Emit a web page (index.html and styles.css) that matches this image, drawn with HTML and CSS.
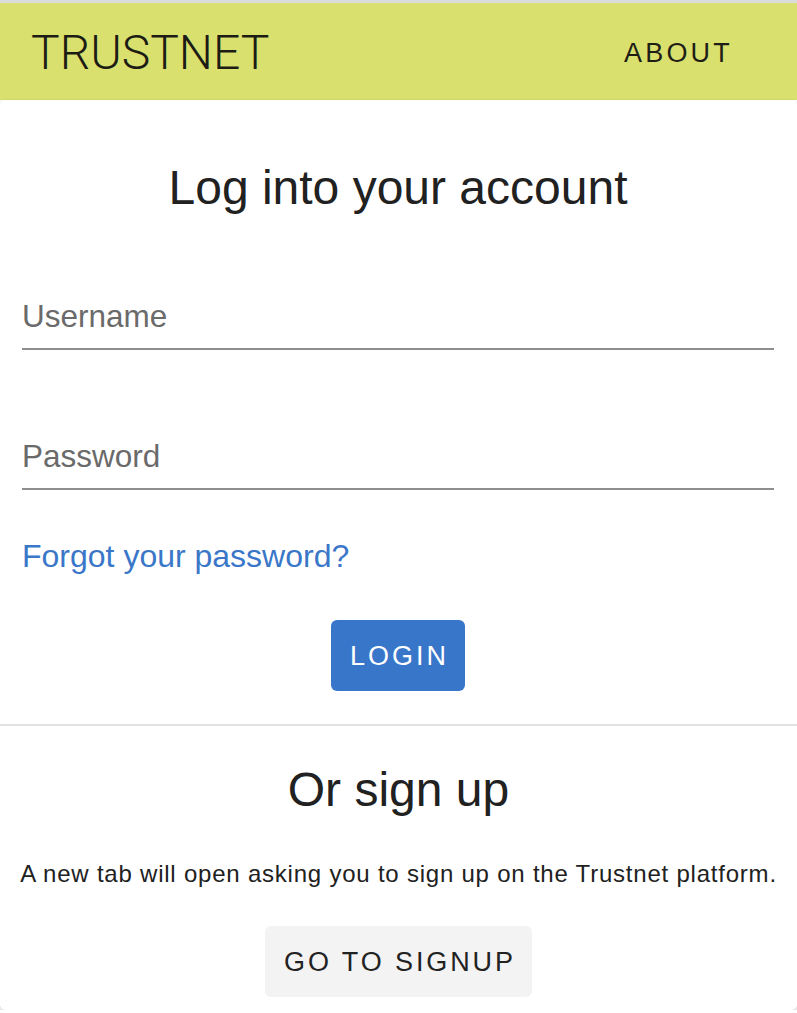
FILE: index.html
```html
<!DOCTYPE html>
<html lang="en">
<head>
<meta charset="utf-8">
<title>Trustnet - Login</title>
<link rel="stylesheet" href="styles.css">
</head>
<body>
  <header class="appbar">
    <div class="brand">TRUSTNET</div>
    <a class="nav-link" href="#">ABOUT</a>
  </header>
  <main class="card">
    <section class="login">
      <h1 class="title">Log into your account</h1>
      <div class="field field-first">
        <span class="field-label">Username</span>
      </div>
      <div class="field field-second">
        <span class="field-label">Password</span>
      </div>
      <a class="forgot" href="#">Forgot your password?</a>
      <div class="btn-row">
        <button class="btn btn-primary" type="button">LOGIN</button>
      </div>
    </section>
    <hr class="divider">
    <section class="signup">
      <h2 class="title title-signup">Or sign up</h2>
      <p class="desc">A new tab will open asking you to sign up on the Trustnet platform.</p>
      <div class="btn-row btn-row-signup">
        <button class="btn btn-secondary" type="button">GO TO SIGNUP</button>
      </div>
    </section>
  </main>
</body>
</html>
```

FILE: styles.css
```css
html, body {
  margin: 0;
  padding: 0;
  background: #ffffff;
}

body {
  font-family: "Liberation Sans", Arial, sans-serif;
  color: #212121;
  width: 797px;
  overflow: hidden;
}

.appbar {
  box-sizing: border-box;
  height: 100px;
  border-top: 3px solid #dcdcdc;
  background: #d9e06e;
  display: flex;
  align-items: center;
  justify-content: space-between;
  padding: 0 64px 0 31px;
}

.brand {
  font-family: Roboto, "Liberation Sans", sans-serif;
  font-weight: 300;
  font-size: 48px;
  line-height: 56px;
  color: #1c1c14;
  letter-spacing: 0;
  margin-top: 2px;
}

.nav-link {
  font-size: 27px;
  letter-spacing: 3.2px;
  color: #1e1e16;
  text-decoration: none;
  line-height: 32px;
  margin-top: 2px;
}

.card {
  background: #ffffff;
  border-radius: 5px;
  box-shadow: 0 1px 3px rgba(0, 0, 0, 0.25);
  height: 910px;
  box-sizing: border-box;
}

.login {
  padding: 60px 23px 0 22px;
  display: flex;
  flex-direction: column;
}

.title {
  margin: 0;
  font-size: 48px;
  line-height: 56px;
  font-weight: 400;
  text-align: center;
  color: #212121;
}

.field {
  border-bottom: 2px solid #8e8e8e;
  padding-bottom: 14px;
}

.field-first {
  margin-top: 82px;
}

.field-second {
  margin-top: 88px;
}

.field-label {
  display: block;
  font-size: 31.5px;
  line-height: 36px;
  color: #6a6a6a;
}

.forgot {
  margin-top: 47px;
  font-size: 32px;
  line-height: 38px;
  color: #3a77c9;
  text-decoration: none;
  align-self: flex-start;
}

.btn-row {
  display: flex;
  justify-content: center;
  margin-top: 45px;
}

.btn {
  font-family: "Liberation Sans", Arial, sans-serif;
  font-size: 27px;
  height: 71px;
  border: none;
  border-radius: 6px;
  padding: 0 19px;
  line-height: 32px;
  cursor: pointer;
}

.btn-primary {
  background: #3876c9;
  color: #ffffff;
  letter-spacing: 3px;
  padding: 0 16px 0 19px;
}

.btn-secondary {
  background: #f3f3f3;
  color: #222222;
  letter-spacing: 2.9px;
  padding: 0 16px 0 19px;
}

.divider {
  margin: 33px 0 0 0;
  border: none;
  height: 2px;
  background: #e2e2e2;
}

.signup {
  padding: 36px 10px 0 10px;
  display: flex;
  flex-direction: column;
}

.desc {
  margin: 42px 0 0 0;
  font-size: 24px;
  line-height: 28px;
  letter-spacing: 0.78px;
  text-align: center;
  color: #212121;
  white-space: nowrap;
}

.btn-row-signup {
  margin-top: 38px;
}
```
